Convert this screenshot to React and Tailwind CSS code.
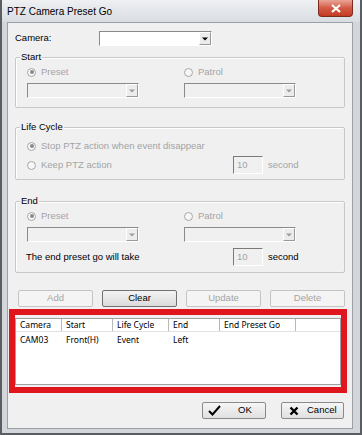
import React from 'react';

function Radio({ checked, label }) {
  return (
    <div className="flex items-center h-[12px]">
      <div className="w-[9px] h-[9px] rounded-full border border-[#a8a8a8] bg-[#f6f6f6] flex items-center justify-center">
        {checked && <div className="w-[4px] h-[4px] rounded-full bg-[#8a8a8a]" />}
      </div>
      <span className="ml-[5px] text-[#a4a4a4]">{label}</span>
    </div>
  );
}

function Combo({ enabled }) {
  return (
    <div
      className={`flex h-[15px] border border-t-[#8a8a8a] border-l-[#8a8a8a] border-b-[#ffffff] border-r-[#ffffff] ${
        enabled ? 'w-[113px] bg-white' : 'w-[112px] bg-[#f0f0f0]'
      }`}
    >
      <div className="flex-1" />
      <div className="w-[12px] h-full flex items-center justify-center bg-[#ececec] border border-t-white border-l-white border-b-[#9a9a9a] border-r-[#9a9a9a]">
        <svg width="6" height="4" viewBox="0 0 6 4">
          <path d="M0 0.5H6L3 3.5Z" fill={enabled ? '#000' : '#9c9c9c'} />
        </svg>
      </div>
    </div>
  );
}

function Field({ value }) {
  return (
    <div className="w-[30px] h-[18px] border border-t-[#7a7a7a] border-l-[#7a7a7a] border-b-[#ffffff] border-r-[#ffffff] bg-[#f0f0f0] pl-[3px] pt-[2px] text-[#a4a4a4] leading-[11px]">
      {value}
    </div>
  );
}

function Group({ title, h, children }) {
  return (
    <div className={`relative w-[330px] border border-[#c8c8c8] rounded-[2px] shadow-[inset_1px_1px_0_#ffffff] ${h}`}>
      <span className="absolute -top-[7px] left-[4px] px-[1px] bg-[#f0f0f0] leading-[12px] text-black">{title}</span>
      {children}
    </div>
  );
}

function Btn({ label, enabled }) {
  return (
    <div
      className={`w-[75px] h-[17px] flex items-center justify-center rounded-[2px] border ${
        enabled
          ? 'border-[#707070] bg-gradient-to-b from-[#f4f4f4] to-[#dadada] text-black'
          : 'border-[#c4c4c4] bg-[#f4f4f4] text-[#a4a4a4]'
      }`}
    >
      {label}
    </div>
  );
}

const cols = [
  { name: 'Camera', w: 'w-[46px]' },
  { name: 'Start', w: 'w-[51px]' },
  { name: 'Life Cycle', w: 'w-[56px]' },
  { name: 'End', w: 'w-[51px]' },
  { name: 'End Preset Go', w: 'w-[76px]' },
];

const row = ['CAM03', 'Front(H)', 'Event', 'Left', ''];

export default function App() {
  return (
    <div className="relative w-[362px] h-[435px] bg-[#d3d7dc] border-l-2 border-r-2 border-b-2 border-[#5a5e63] font-['Liberation_Sans',Arial,sans-serif] text-[9.5px] overflow-hidden">
      {/* title bar */}
      <div className="h-[22px] flex items-center pl-[5px] bg-gradient-to-b from-[#eef0f2] to-[#d9dde2] text-[10px] text-black">
        PTZ Camera Preset Go
      </div>
      <div className="absolute top-0 right-[7px] w-[35px] h-[17px] rounded-b-[4px] border border-t-0 border-[#7d2a1f] bg-gradient-to-b from-[#e8a596] via-[#d35a44] to-[#c23b22] flex items-center justify-center">
        <svg width="10" height="9" viewBox="0 0 10 9">
          <path d="M1 1L9 8M9 1L1 8" stroke="#fff" strokeWidth="2.2" />
        </svg>
      </div>

      {/* client area */}
      <div className="ml-[5px] w-[346px] h-[407px] bg-[#f0f0f0] border border-[#9aa0a6] pl-[7px] pt-[8px]">
        <div className="flex items-center h-[15px]">
          <span className="w-[84px] text-black">Camera:</span>
          <Combo enabled />
        </div>

        <div className="mt-[11px]">
          <Group title="Start" h="h-[51px]">
            <div className="flex pl-[11px] pt-[8px]">
              <div className="w-[157px]">
                <Radio checked label="Preset" />
                <div className="mt-[5px]">
                  <Combo />
                </div>
              </div>
              <div>
                <Radio label="Patrol" />
                <div className="mt-[5px]">
                  <Combo />
                </div>
              </div>
            </div>
          </Group>
        </div>

        <div className="mt-[19px]">
          <Group title="Life Cycle" h="h-[53px]">
            <div className="pl-[11px] pt-[12px]">
              <Radio checked label="Stop PTZ action when event disappear" />
              <div className="flex items-center mt-[4px]">
                <div className="w-[206px]">
                  <Radio label="Keep PTZ action" />
                </div>
                <Field value="10" />
                <span className="ml-[5px] text-[#a4a4a4]">second</span>
              </div>
            </div>
          </Group>
        </div>

        <div className="mt-[21px]">
          <Group title="End" h="h-[72px]">
            <div className="flex pl-[11px] pt-[8px]">
              <div className="w-[157px]">
                <Radio checked label="Preset" />
                <div className="mt-[5px]">
                  <Combo />
                </div>
              </div>
              <div>
                <Radio label="Patrol" />
                <div className="mt-[5px]">
                  <Combo />
                </div>
              </div>
            </div>
            <div className="flex items-center mt-[6px] pl-[10px]">
              <span className="w-[207px] text-black">The end preset go will take</span>
              <Field value="10" />
              <span className="ml-[5px] text-black">second</span>
            </div>
          </Group>
        </div>

        <div className="flex gap-[9px] mt-[17px] ml-[3px]">
          <Btn label="Add" />
          <Btn label="Clear" enabled />
          <Btn label="Update" />
          <Btn label="Delete" />
        </div>

        {/* highlighted list */}
        <div className="mt-[2px] -ml-[6px] w-[338px] h-[84px] border-[6px] border-[#e0161e] pt-[3px] pb-[2px]">
          <div className="h-full bg-white border border-[#a0a0a0] font-['Noto_Sans',sans-serif] text-[8.5px]">
            <div className="flex h-[13px] border-b border-[#e2e2e2]">
              {cols.map((c) => (
                <div key={c.name} className={`${c.w} h-full flex items-center pl-[4px] border-r border-[#b8b8b8] leading-none`}>
                  {c.name}
                </div>
              ))}
            </div>
            <div className="flex h-[17px] items-center">
              {row.map((v, i) => (
                <div key={i} className={`${cols[i].w} pl-[4px] leading-none`}>
                  {v}
                </div>
              ))}
            </div>
          </div>
        </div>

        <div className="flex justify-end gap-[15px] mt-[9px] pr-[8px]">
          <div className="w-[64px] h-[17px] flex items-center rounded-[2px] border border-[#8a8a8a] bg-gradient-to-b from-[#f6f6f6] to-[#e0e0e0] pl-[5px]">
            <svg width="13" height="11" viewBox="0 0 13 11">
              <path d="M1 6L4.5 9.5L12 1" stroke="#000" strokeWidth="2" fill="none" />
            </svg>
            <span className="ml-[17px]">OK</span>
          </div>
          <div className="w-[63px] h-[17px] flex items-center rounded-[2px] border border-[#8a8a8a] bg-gradient-to-b from-[#f6f6f6] to-[#e0e0e0] pl-[7px]">
            <svg width="10" height="10" viewBox="0 0 10 10">
              <path d="M1.5 1.5L8.5 8.5M8.5 1.5L1.5 8.5" stroke="#000" strokeWidth="2.4" />
            </svg>
            <span className="ml-[8px]">Cancel</span>
          </div>
        </div>
      </div>
    </div>
  );
}
